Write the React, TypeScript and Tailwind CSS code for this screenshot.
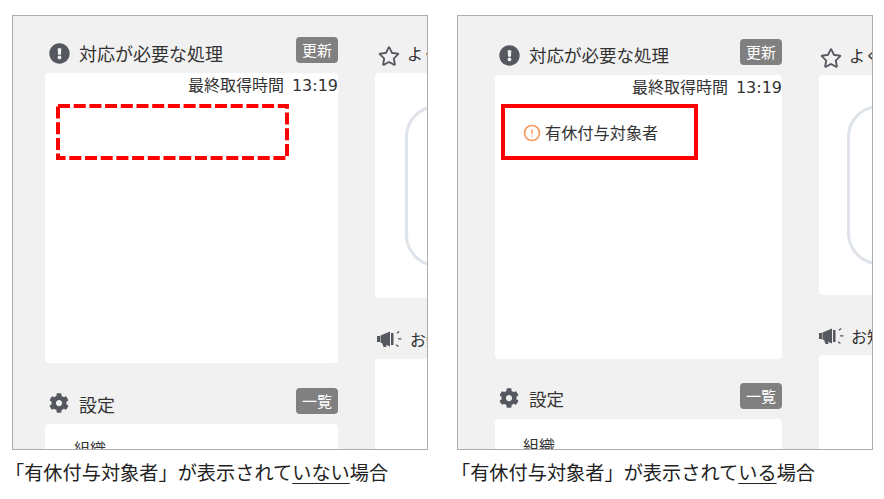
import { CircleAlert } from "lucide-react";
import { FaCog, FaExclamationCircle, FaRegStar } from "react-icons/fa";

function Megaphone() {
  return (
    <svg width="25" height="18" viewBox="0 0 25 18" fill="currentColor">
      <path d="M0 6h3v6H0z" />
      <path d="M3.500 5.500 13 1.500v15l-9.500-4z" />
      <path d="M5 12.500h3.500l1 4.500H6.500z" />
      <path d="M14 3h2.500v12H14z" />
      <path d="M19.500 2.800 21.800 1l.8 1-2.300 1.800zM21 8.200h3.500v1.400H21zM19.500 14.200l2.300 1.800-.8 1-2.300-1.800z" />
    </svg>
  );
}

function Head({
  icon,
  title,
  btn,
  cls,
  iconCls,
  textCls,
}: {
  icon: React.ReactNode;
  title: string;
  btn?: string;
  cls: string;
  iconCls: string;
  textCls: string;
}) {
  return (
    <div className={`flex h-[26px] items-center ${cls}`}>
      <span className={`flex w-[28px] shrink-0 justify-center text-[#55585f] ${iconCls}`}>{icon}</span>
      <span className={`whitespace-nowrap pt-[6px] leading-[26px] text-[#333] ${textCls}`}>{title}</span>
      {btn && (
        <span className="ml-auto flex h-[26px] w-[42px] items-center justify-center rounded-[4px] bg-[#808080] text-[15px] text-white">
          {btn}
        </span>
      )}
    </div>
  );
}

function Caption({ lead, mark, cls }: { lead: string; mark: string; cls: string }) {
  return (
    <p className={`mt-[9px] whitespace-nowrap text-[19.2px] leading-[26px] text-[#222] ${cls}`}>
      {lead}
      <span className="underline decoration-1 underline-offset-[3px]">{mark}</span>場合
    </p>
  );
}

function Stamp() {
  return (
    <p className="h-[22px] text-right text-[16px] leading-[22px] text-[#333]">
      最終取得時間
      <span className="ml-[8px] font-['DejaVu_Sans']">13:19</span>
    </p>
  );
}

export default function App() {
  return (
    <div
      className="flex h-[499px] w-[884px] gap-[29px] bg-white pl-[12px] pt-[15px]"
      style={{ fontFamily: '"Noto Sans CJK JP", "Noto Sans", sans-serif' }}
    >
      <div className="w-[416px]">
        <div className="flex h-[435px] w-[416px] gap-[37px] overflow-hidden border border-[#adadad] bg-[#f1f1f1] pl-[32px]">
          <div className="w-[293px] shrink-0">
            <Head cls="mt-[21px]" iconCls="pt-[6px]" textCls="ml-[6px] text-[18px]" icon={<FaExclamationCircle size={21} />} title="対応が必要な処理" btn="更新" />
            <div className="mt-[10px] h-[290px] rounded-[4px] bg-white">
              <Stamp />
              <svg width="233" height="56" className="ml-[11px] mt-[9px]">
                <rect x="2" y="2" width="229" height="52" fill="none" stroke="#ff0000" strokeWidth="4" strokeDasharray="12 3.700" />
              </svg>
            </div>
            <Head cls="mt-[25px]" iconCls="pt-[4px]" textCls="ml-[6px] text-[18px]" icon={<FaCog size={20} />} title="設定" btn="一覧" />
            <div className="mt-[10px] h-[60px] rounded-[4px] bg-white pl-[29px] pt-[14px] text-[16px] leading-[20px] text-[#333]">
              組織
            </div>
          </div>
          <div className="w-[300px] shrink-0">
            <Head cls="mt-[21px]" iconCls="pt-[12px]" textCls="ml-[4px] text-[16px]" icon={<FaRegStar size={22} />} title="よく使う機能" />
            <div className="mt-[10px] h-[225px] rounded-[4px] bg-white pl-[30px] pt-[32px]">
              <div className="h-[162px] w-[200px] rounded-[32px] border-[3px] border-[#dfe3ea]" />
            </div>
            <Head cls="mt-[25px]" iconCls="pt-[6px]" textCls="ml-[7px] text-[16px]" icon={<Megaphone />} title="お知らせ" />
            <div className="mt-[10px] h-[100px] rounded-[4px] bg-white" />
          </div>
        </div>
        <Caption cls="-ml-[7px]" lead="「有休付与対象者」が表示されて" mark="いない" />
      </div>

      <div className="w-[416px]">
        <div className="flex h-[435px] w-[416px] gap-[37px] overflow-hidden border border-[#adadad] bg-[#f1f1f1] pl-[37px]">
          <div className="w-[287px] shrink-0">
            <Head cls="mt-[23px]" iconCls="pt-[6px]" textCls="ml-[6px] text-[17.5px]" icon={<FaExclamationCircle size={21} />} title="対応が必要な処理" btn="更新" />
            <div className="mt-[10px] h-[284px] rounded-[4px] bg-white">
              <Stamp />
              <div className="ml-[6px] mt-[7px] flex h-[56px] w-[197px] items-center gap-[4px] border-4 border-[#ff0000] pl-[18px]">
                <CircleAlert size={18} strokeWidth={2.2} className="mt-[2px] text-[#f79a5e]" />
                <span className="text-[16.2px] text-[#333]">有休付与対象者</span>
              </div>
            </div>
            <Head cls="mt-[24px]" iconCls="pt-[4px]" textCls="ml-[6px] text-[17.5px]" icon={<FaCog size={20} />} title="設定" btn="一覧" />
            <div className="mt-[10px] h-[60px] rounded-[4px] bg-white pl-[28px] pt-[16px] text-[16px] leading-[20px] text-[#333]">
              組織
            </div>
          </div>
          <div className="w-[300px] shrink-0">
            <Head cls="mt-[23px] -ml-[2px]" iconCls="pt-[12px]" textCls="ml-[4px] text-[16px]" icon={<FaRegStar size={22} />} title="よく使う機能" />
            <div className="mt-[10px] h-[220px] rounded-[4px] bg-white pl-[28px] pt-[30px]">
              <div className="h-[160px] w-[200px] rounded-[32px] border-[3px] border-[#dfe3ea]" />
            </div>
            <Head cls="mt-[25px] -ml-[2px]" iconCls="pt-[6px]" textCls="ml-[6px] text-[16px]" icon={<Megaphone />} title="お知らせ" />
            <div className="mt-[9px] h-[100px] rounded-[4px] bg-white" />
          </div>
        </div>
        <Caption cls="-ml-[6px]" lead="「有休付与対象者」が表示されて" mark="いる" />
      </div>
    </div>
  );
}
